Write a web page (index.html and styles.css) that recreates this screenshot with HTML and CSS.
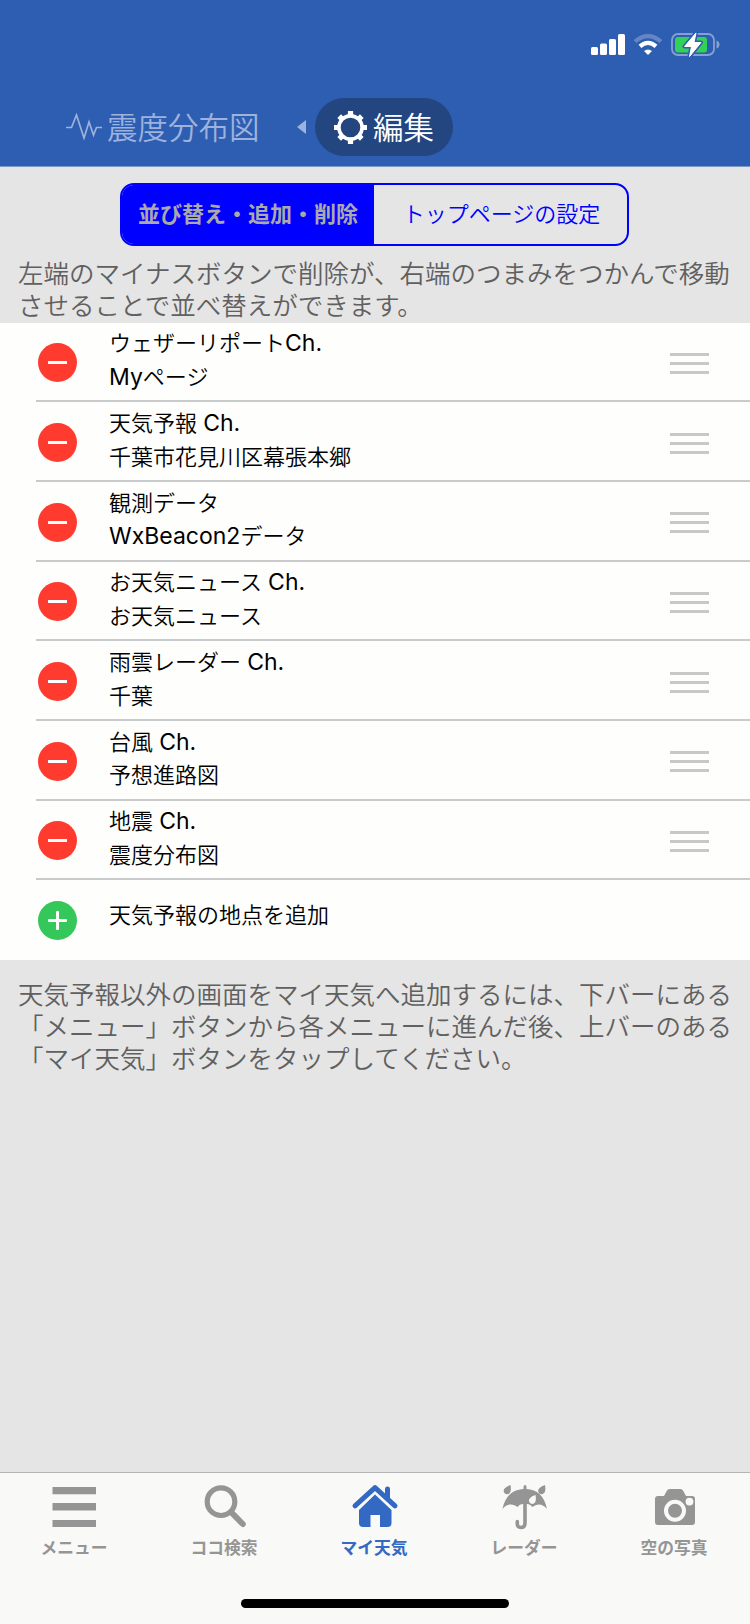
FILE: index.html
```
<!DOCTYPE html>
<html lang="ja">
<head>
    <meta charset="UTF-8">
    <meta name="viewport" content="width=device-width, initial-scale=1.0">
    <title>マイ天気 編集</title>
    <link rel="stylesheet" href="styles.css">
</head>
<body>
    <header class="header">
        <div class="status-bar">
            <svg class="signal" width="34" height="22" viewBox="0 0 34 22" fill="#fff">
                <rect x="0" y="13" width="7" height="8" rx="1.5"/>
                <rect x="9" y="9.5" width="7" height="11.5" rx="1.5"/>
                <rect x="18" y="5" width="7" height="16" rx="1.5"/>
                <rect x="27" y="0" width="7" height="21" rx="1.5"/>
            </svg>
            <svg class="wifi" width="30" height="22" viewBox="0 0 30 22" fill="none">
                <path d="M2 7.5Q15-3.5 28 7.5" stroke="#6586c4" stroke-width="4.2"/>
                <path d="M7 12.3Q15 5.5 23 12.3" stroke="#fff" stroke-width="4.2"/>
                <path d="M11 17Q15 13.8 19 17L15 21z" fill="#fff"/>
            </svg>
            <svg class="battery" width="49" height="26" viewBox="0 0 49 26">
                <rect x="1" y="2" width="42" height="21" rx="6" fill="none" stroke="#86a0d1" stroke-width="1.8"/>
                <rect x="4" y="5" width="32" height="15.5" rx="3" fill="#34d158"/>
                <path d="M45.5 8.5q3 1 3 4t-3 4z" fill="#86a0d1"/>
                <path d="M25 1L13.5 14.5h7L18.5 24.5 30 10.5h-7z" fill="#fff" stroke="#2d5eb1" stroke-width="4" stroke-linejoin="round"/>
                <path d="M25 1L13.5 14.5h7L18.5 24.5 30 10.5h-7z" fill="#fff" stroke="#fff" stroke-width="1" stroke-linejoin="round"/>
            </svg>
        </div>
        <nav class="pages">
            <a class="page-prev">
                <svg width="37" height="28" viewBox="0 0 37 28" fill="none" stroke="#9db2dd" stroke-width="1.7">
                    <path d="M0 14.5h5.500L10.500 2l7.500 23 5-16 4.500 13 3-7.500H36"/>
                </svg>
                <span class="page-name">震度分布図</span>
            </a>
            <svg class="arrow" width="9" height="14" viewBox="0 0 9 14"><path d="M9 0v14L0 7z" fill="#9db2dd"/></svg>
            <a class="page-current">
                <svg width="33" height="33" viewBox="-16.5 -16.5 33 33" fill="none" stroke="#fff">
                    <circle r="11.6" stroke-width="3.6"/>
                    <g stroke-width="5.2">
                        <path d="M0-16.500V-12M0 16.500V12M-16.500 0H-12M16.500 0H12"/>
                        <path d="M-11.300-11.300l3 3M11.300-11.300l-3 3M-11.300 11.300l3-3M11.300 11.300l-3-3"/>
                    </g>
                </svg>
                <span class="page-name">編集</span>
            </a>
        </nav>
    </header>

    <main class="content">
        <div class="segment">
            <div class="segment-item active">並び替え・追加・削除</div>
            <div class="segment-item">トップページの設定</div>
        </div>
        <p class="note note-top">左端のマイナスボタンで削除が、右端のつまみをつかんで移動<br>させることで並べ替えができます。</p>

        <ul class="list">
            <li class="row">
                <span class="circle minus"></span>
                <div class="label">ウェザーリポート<span class="en">Ch.</span><br><span class="en">My</span>ページ</div>
                <span class="handle"></span>
            </li>
            <li class="row">
                <span class="circle minus"></span>
                <div class="label">天気予報 <span class="en">Ch.</span><br>千葉市花見川区幕張本郷</div>
                <span class="handle"></span>
            </li>
            <li class="row">
                <span class="circle minus"></span>
                <div class="label">観測データ<br><span class="en">WxBeacon2</span>データ</div>
                <span class="handle"></span>
            </li>
            <li class="row">
                <span class="circle minus"></span>
                <div class="label">お天気ニュース <span class="en">Ch.</span><br>お天気ニュース</div>
                <span class="handle"></span>
            </li>
            <li class="row">
                <span class="circle minus"></span>
                <div class="label">雨雲レーダー <span class="en">Ch.</span><br>千葉</div>
                <span class="handle"></span>
            </li>
            <li class="row">
                <span class="circle minus"></span>
                <div class="label">台風 <span class="en">Ch.</span><br>予想進路図</div>
                <span class="handle"></span>
            </li>
            <li class="row">
                <span class="circle minus"></span>
                <div class="label">地震 <span class="en">Ch.</span><br>震度分布図</div>
                <span class="handle"></span>
            </li>
            <li class="row row-add">
                <span class="circle plus"></span>
                <div class="label">天気予報の地点を追加</div>
            </li>
        </ul>

        <p class="note note-bottom">天気予報以外の画面をマイ天気へ追加するには、下バーにある<br>「メニュー」ボタンから各メニューに進んだ後、上バーのある<br>「マイ天気」ボタンをタップしてください。</p>
    </main>

    <footer class="tab-bar">
        <nav class="tabs">
            <a class="tab">
                <svg width="48" height="48" viewBox="0 0 48 48" fill="#959595">
                    <path d="M1.500 4H45v7.300H1.500zM1.500 20H45v7.500H1.500zM1.500 37H45v7H1.500z"/>
                </svg>
                <span>メニュー</span>
            </a>
            <a class="tab">
                <svg width="48" height="48" viewBox="0 0 48 48" fill="none" stroke="#959595">
                    <circle cx="20" cy="18.7" r="13.8" stroke-width="5.2"/>
                    <path d="M30.500 29.500L41.800 41" stroke-width="6" stroke-linecap="round"/>
                </svg>
                <span>ココ検索</span>
            </a>
            <a class="tab active">
                <svg width="48" height="48" viewBox="0 0 48 48">
                    <path d="M4 22.800L24 4.600 44 22.800M36.500 15V6" fill="none" stroke="#3469c3" stroke-width="5" stroke-linecap="round" stroke-linejoin="round"/>
                    <path d="M24 11.500L40.500 27V40q0 4-4 4H29V32H19.500V44H12q-4 0-4-4V27z" fill="#3469c3"/>
                </svg>
                <span>マイ天気</span>
            </a>
            <a class="tab">
                <svg width="48" height="48" viewBox="0 0 48 48">
                    <path d="M1.500 26C4 13 12 6.500 22.500 6V4q0-2 1.500-2t1.500 2v2C36 6.500 43.500 13 46 26 42 20.500 36 20 31.500 24q-2.500-3-5-3h-5q-3 0-5 3C12 20 5.500 20.500 1.500 26z" fill="#959595"/>
                    <path d="M24 20V40q0 4.500-4 4.500T16.300 40V38.500" fill="none" stroke="#959595" stroke-width="3.600" stroke-linecap="round"/>
                    <path d="M9.500 2Q2.500 4.500 2.600 8q.8 3.500 4 3.200Q11 10.500 9.500 2zM44 2Q37 4.500 37.100 8q.8 3.500 4 3.200Q45.500 10.500 44 2z" fill="#959595"/>
                    <path d="M34.500 12Q27 14.500 28 18.500q1.200 3 4.300 2.300 3.700-1.300 2.200-8.800z" fill="#f9f9f7"/>
                </svg>
                <span>レーダー</span>
            </a>
            <a class="tab">
                <svg width="48" height="48" viewBox="0 0 48 48">
                    <path d="M7 13h6l3-5.500q.8-1.500 2.500-1.500h11q1.700 0 2.500 1.500L35 13h6q3 0 3 3v23q0 3-3 3H7q-3 0-3-3V16q0-3 3-3z" fill="#959595"/>
                    <circle cx="24" cy="27.7" r="9" fill="none" stroke="#f9f9f7" stroke-width="4"/>
                    <circle cx="38.5" cy="18.6" r="3.9" fill="#f9f9f7"/>
                </svg>
                <span>空の写真</span>
            </a>
        </nav>
        <div class="home-indicator"></div>
    </footer>
</body>
</html>
```
FILE: styles.css
```
* {
    box-sizing: border-box;
}

body {
    margin: 0;
    width: 750px;
    height: 1624px;
    display: flex;
    flex-direction: column;
    overflow: hidden;
    background-color: #e5e5e5;
    font-family: Inter, "Noto Sans CJK JP", sans-serif;
}

.header {
    height: 167px;
    background-color: #2d5eb1;
    border-bottom: 1px solid #7f97c4;
}

.status-bar {
    height: 98px;
    padding: 34px 30px 0 0;
    display: flex;
    justify-content: flex-end;
    align-items: flex-start;
}

.wifi {
    margin-left: 8px;
}

.battery {
    margin: -2px 0 0 8px;
}

.pages {
    height: 58px;
    padding-left: 66px;
    display: flex;
    align-items: center;
    font-size: 30.5px;
    font-weight: 350;
}

.page-name {
    padding-bottom: 3px;
}

.page-prev {
    display: flex;
    align-items: center;
    gap: 4px;
    width: 231px;
    color: #9db2dd;
}

.page-current {
    width: 138px;
    height: 58px;
    margin-left: 9px;
    padding-left: 19px;
    display: flex;
    align-items: center;
    gap: 6px;
    border-radius: 29px;
    background-color: #234680;
    color: #fff;
}

.content {
    flex: 1;
}

.segment {
    width: 509px;
    height: 63px;
    margin: 16px 0 0 120px;
    display: flex;
    border: 2px solid #0000ff;
    border-radius: 14px;
    overflow: hidden;
}

.segment-item {
    flex: 1;
    display: flex;
    align-items: center;
    justify-content: center;
    padding: 0 0 5px 2px;
    font-size: 22px;
    font-weight: 350;
    color: #0000ff;
}

.segment-item.active {
    flex: none;
    width: 252px;
    padding-left: 0;
    background-color: #0000ff;
    color: #aaa;
    font-weight: 700;
}

.note {
    margin: 0;
    padding: 0 18px;
    font-size: 25.5px;
    font-weight: 350;
    line-height: 32px;
    color: #606060;
    white-space: nowrap;
}

.note-top {
    height: 76.5px;
    padding-top: 12px;
}

.note-bottom {
    padding-top: 19px;
}

.list {
    margin: 0;
    padding: 0;
    list-style: none;
    background-color: #fefefd;
}

.row {
    height: 79.7px;
    margin-left: 36px;
    padding-right: 41px;
    display: flex;
    align-items: center;
    border-bottom: 2px solid #c9cacc;
}

.row:last-child {
    border-bottom: none;
}

.circle {
    width: 39px;
    height: 39px;
    margin: 3px 0 0 2px;
    border-radius: 50%;
    display: grid;
    place-items: center;
}

.circle::before,
.circle::after {
    content: "";
    grid-area: 1 / 1;
    width: 19px;
    height: 3px;
    border-radius: 1px;
    background-color: #fff;
}

.minus {
    background-color: #ff3b30;
}

.plus {
    background-color: #34c759;
}

.plus::after {
    transform: rotate(90deg);
}

.label {
    flex: 1;
    margin: -1px 0 0 32px;
    font-size: 22px;
    font-weight: 350;
    line-height: 33.5px;
    color: #000;
}

.en {
    font-size: 23px;
    font-weight: 400;
    line-height: 1;
}

.row-add .circle {
    margin-top: 1px;
}

.row-add .label {
    margin-top: -8px;
}

.handle {
    width: 39px;
    height: 21px;
    margin-top: 4px;
    display: flex;
    flex-direction: column;
    justify-content: space-between;
    border-top: 3px solid #c8c8c9;
    border-bottom: 3px solid #c8c8c9;
}

.handle::before {
    content: "";
    height: 3px;
    margin: auto 0;
    background-color: #c8c8c9;
}

.tab-bar {
    height: 152px;
    border-top: 1px solid #b4b4b4;
    background-color: #f9f9f7;
}

.tabs {
    height: 126px;
    padding-top: 10px;
    display: flex;
}

.tab {
    flex: 1;
    display: flex;
    flex-direction: column;
    align-items: center;
    font-size: 16.8px;
    font-weight: 700;
    line-height: 34px;
    color: #959595;
}

.tab span {
    margin-right: 2px;
}

.tab.active {
    color: #3469c3;
}

.home-indicator {
    width: 268px;
    height: 9px;
    margin: 0 auto;
    border-radius: 5px;
    background-color: #000;
}
```
